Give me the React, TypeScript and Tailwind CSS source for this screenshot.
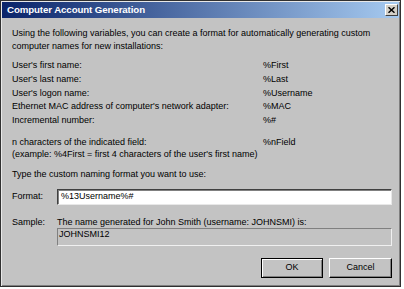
import React from "react";

export default function App() {
  const rows: [string, string][] = [
    ["User's first name:", "%First"],
    ["User's last name:", "%Last"],
    ["User's logon name:", "%Username"],
    ["Ethernet MAC address of computer's network adapter:", "%MAC"],
    ["Incremental number:", "%#"],
  ];
  return (
    <div className="w-[404px] h-[289px] bg-white">
      <div
        className="w-[401px] h-[287px] bg-[#c3c3c3] border border-[#303030] shadow-[inset_1px_1px_0_#e8e8e8,inset_-1px_-1px_0_#808080] p-[1px] flex flex-col text-[9px] text-black"
        style={{ fontFamily: '"Liberation Sans", Arial, sans-serif' }}
      >
        <div className="h-[16px] bg-[linear-gradient(to_right,#0a246a,#a6caf0)] flex items-center justify-between pl-[5px] pr-[1px]">
          <span className="text-white font-bold text-[9.7px] tracking-[-0.1px]">Computer Account Generation</span>
          <div className="w-[13px] h-[12px] bg-[#d4d0c8] border border-t-white border-l-white border-r-[#404040] border-b-[#404040] flex items-center justify-center">
            <svg width="7" height="6" viewBox="0 0 7 6">
              <path d="M0.5 0.3 L6.5 5.7 M6.5 0.3 L0.5 5.7" stroke="black" strokeWidth="1.5" />
            </svg>
          </div>
        </div>
        <div className="flex-1 pl-[10px] pr-[7px] pt-[9px] flex flex-col">
          <p className="leading-[13px]">
            Using the following variables, you can create a format for automatically generating custom
            <br />
            computer names for new installations:
          </p>
          <div className="mt-[6px] flex flex-col leading-[13.75px]">
            {rows.map(([a, b]) => (
              <div key={b} className="flex">
                <span className="w-[251px]">{a}</span>
                <span>{b}</span>
              </div>
            ))}
          </div>
          <div className="mt-[8px] flex flex-col leading-[12px]">
            <div className="flex">
              <span className="w-[251px]">n characters of the indicated field:</span>
              <span>%nField</span>
            </div>
            <p>(example: %4First = first 4 characters of the user's first name)</p>
          </div>
          <p className="mt-[8px] leading-[13px]">Type the custom naming format you want to use:</p>
          <div className="mt-[8px] flex items-center">
            <span className="w-[45px]">Format:</span>
            <div className="flex-1 h-[16px] bg-white border border-t-[#404040] border-l-[#404040] border-b-[#e8e8e8] border-r-[#e8e8e8] shadow-[inset_1px_1px_0_#808080] px-[3px] flex items-center">
              %13Username%#
            </div>
          </div>
          <div className="mt-[11px] flex">
            <span className="w-[45px] leading-[12px]">Sample:</span>
            <div className="flex-1 flex flex-col">
              <span className="leading-[12px]">The name generated for John Smith (username: JOHNSMI) is:</span>
              <div className="h-[18px] border border-t-[#808080] border-l-[#808080] border-b-[#f0f0f0] border-r-[#f0f0f0] px-[1px] leading-[10px]">
                JOHNSMI12
              </div>
            </div>
          </div>
          <div className="mt-[12px] flex justify-end gap-[6px]">
            <button className="w-[62px] h-[20px] bg-[#c3c3c3] border border-black shadow-[inset_1px_1px_0_#ffffff,inset_-1px_-1px_0_#808080] leading-none">
              OK
            </button>
            <button className="w-[63px] h-[20px] bg-[#c3c3c3] border border-t-white border-l-white border-r-black border-b-black shadow-[inset_-1px_-1px_0_#808080] leading-none">
              Cancel
            </button>
          </div>
        </div>
      </div>
    </div>
  );
}
